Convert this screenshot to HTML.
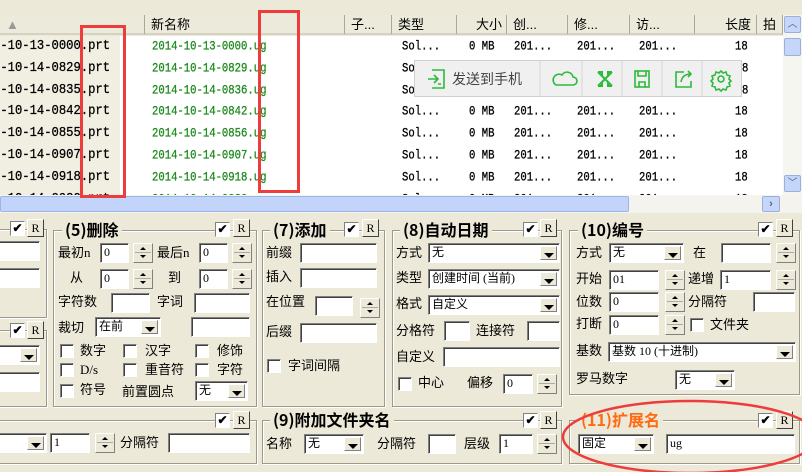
<!DOCTYPE html><html><head><meta charset="utf-8"><style>
*{box-sizing:border-box;margin:0;padding:0}
body{width:802px;height:472px;overflow:hidden;background:#ECE9D8;position:relative;font-family:"Liberation Sans","Noto Sans CJK SC",sans-serif;font-size:13px;color:#000}
.a{position:absolute;white-space:nowrap}
.t{position:absolute;white-space:nowrap;font-size:13px;line-height:16px;font-family:"Liberation Serif","Noto Sans CJK SC",sans-serif}
.h{position:absolute;top:15px;height:20px;border-right:1px solid #ACA899;border-bottom:2px solid #D6D2C2;background:#EBEADB;font-size:13px;line-height:19px;padding-left:6px;white-space:nowrap;overflow:hidden}
.r{position:absolute;font-family:"Liberation Mono",monospace;font-size:10.6px;line-height:14px;white-space:nowrap;transform:scaleY(1.25);transform-origin:0 0;-webkit-text-stroke:0.25px}
.r1{font-size:12.2px;transform:scaleY(1.1)}
.g{color:#1E8A1E}
.in{position:absolute;height:20px;background:#fff;border:1px solid;border-color:#808080 #fff #fff #808080;box-shadow:inset 1px 1px 0 #404040;font-size:12px;line-height:17px;padding-left:3px;font-family:"Liberation Serif","Noto Sans CJK SC",serif}
.sp{position:absolute;width:20px;height:20px;background:#ECE9D8;border:1px solid;border-color:#fff #808080 #808080 #fff}
.sp:before{content:"";position:absolute;left:6px;top:3px;border:3px solid transparent;border-bottom:3px solid #000;border-top:0}
.sp:after{content:"";position:absolute;left:6px;top:11px;border:3px solid transparent;border-top:3px solid #000;border-bottom:0}
.sp i{position:absolute;left:1px;right:1px;top:8px;border-top:1px solid #aaa}
.dd{position:absolute;top:2px;right:2px;width:17px;bottom:2px;background:#ECE9D8;border:1px solid;border-color:#fff #808080 #808080 #fff}
.dd:after{content:"";position:absolute;left:3px;top:6px;border:5px solid transparent;border-top:5px solid #000;border-bottom:0}
.cb{position:absolute;width:14px;height:14px;background:#fff;border:1px solid;border-color:#808080 #fff #fff #808080;box-shadow:inset 1px 1px 0 #404040}
.ck{position:absolute;width:15px;height:15px;background:#fff;border:1px solid;border-color:#808080 #fff #fff #808080;font-size:12px;line-height:13px;text-align:center;font-weight:bold}
.R{position:absolute;width:17px;height:18px;background:#ECE9D8;border:1px solid;border-color:#fff #404040 #404040 #fff;font-family:"Liberation Serif",serif;font-size:12px;line-height:16px;text-align:center}
.gb{position:absolute;border:1px solid #9D9A8C;box-shadow:1px 1px 0 #fff,inset 1px 1px 0 #fff}
.ti{position:absolute;background:#ECE9D8;font-weight:bold;font-size:16px;line-height:18px;padding:0 3px;white-space:nowrap;font-family:"Noto Sans CJK SC",sans-serif}
</style></head><body>
<div class="h" style="left:0;width:145px;color:#999">▲</div>
<div class="h" style="left:145px;width:200px">新名称</div>
<div class="h" style="left:345px;width:47px">子...</div>
<div class="h" style="left:392px;width:65px">类型</div>
<div class="h" style="left:457px;width:50px;text-align:right;padding-right:4px">大小</div>
<div class="h" style="left:507px;width:61px">创...</div>
<div class="h" style="left:568px;width:62px">修...</div>
<div class="h" style="left:630px;width:65px">访...</div>
<div class="h" style="left:695px;width:62px;text-align:right;padding-right:5px">长度</div>
<div class="h" style="left:757px;width:26px">拍</div>
<div class="a" style="left:0;top:36px;width:783px;height:159px;background:#fff"></div>
<div class="a" style="left:0;top:36px;width:120px;height:159px;background:#F1EFE2"></div>
<div class="a" style="left:0;top:36px;width:783px;height:159px;overflow:hidden" id="rows"></div>
<div class="a" style="left:783px;top:15px;width:19px;height:180px;background:#F6F6F1"></div>
<div class="a" style="left:784px;top:16px;width:17px;height:17px;background:#C6D6F8;border:1px solid #98AFE0;border-radius:2px;font-size:10px;text-align:center;color:#4D6185;line-height:15px">︿</div>
<div class="a" style="left:784px;top:38px;width:17px;height:18px;background:#C6D6F8;border:1px solid #98AFE0;border-radius:2px"></div>
<div class="a" style="left:784px;top:175px;width:17px;height:17px;background:#C6D6F8;border:1px solid #98AFE0;border-radius:2px;font-size:10px;text-align:center;color:#4D6185;line-height:15px">﹀</div>
<div class="a" style="left:0;top:195px;width:802px;height:18px;background:#F4F3EE"></div>
<div class="a" style="left:0;top:196px;width:629px;height:16px;background:#C3D4FB;border:1px solid #9CB4E8;border-radius:2px"></div>
<div class="a" style="left:762px;top:196px;width:18px;height:16px;background:#C6D6F8;border:1px solid #98AFE0;border-radius:2px;font-size:11px;text-align:center;color:#4D6185;line-height:14px;font-weight:bold">›</div>
<div class="a" style="left:414px;top:60px;width:328px;height:37px;background:#F0F0F0;border:1px solid #D0D0D0"></div>
<svg class="a" style="left:414px;top:60px" width="328" height="37">
<g stroke="#D6D6D6"><line x1="126" y1="1" x2="126" y2="36"/><line x1="168" y1="1" x2="168" y2="36"/><line x1="208" y1="1" x2="208" y2="36"/><line x1="248" y1="1" x2="248" y2="36"/><line x1="288" y1="1" x2="288" y2="36"/></g>
<g fill="none" stroke="#2DBA3A" stroke-width="1.6">
<path d="M18 10h12v18h-12M14 19h9M20 15l4 4-4 4M24 24h3"/>
<path d="M142 25h17a4 4 0 0 0 0-8a6 6 0 0 0-11-2a5 5 0 0 0-6 10z"/>
<path d="M184 12l14 14M198 12l-14 14" stroke-width="2"/>
<path d="M184 12h4v4M198 12h-4v4M184 26h4v-4M198 26h-4v-4" stroke-width="2"/>
<rect x="221" y="11" width="14" height="16"/><path d="M224 11v5h8v-5M225 27v-5h6v5"/>
<path d="M270 12h-8v15h15v-6M267 22c1-6 5-8 10-8M274 11l3 3-3 3"/>
<circle cx="307" cy="19" r="3"/><path d="M307 11l2 2 3-1 1 3 3 1-1 3 2 2-2 2 1 3-3 1-1 3-3-1-2 2-2-2-3 1-1-3-3-1 1-3-2-2 2-2-1-3 3-1 1-3 3 1z"/>
</g>
<text x="38" y="24" font-family="Noto Sans CJK SC,sans-serif" font-size="14" fill="#444">发送到手机</text>
</svg>
<div class="a" style="left:80px;top:25px;width:46px;height:173px;border:3px solid #EE3B3B"></div>
<div class="a" style="left:258px;top:10px;width:42px;height:183px;border:3px solid #EE3B3B"></div>

<div class="gb" style="left:-5px;top:229px;width:52px;height:89px"></div>
<div class="ck" style="left:10px;top:221px">✔</div><div class="R" style="left:27px;top:219px">R</div>
<div class="in" style="left:-4px;top:241px;width:44px"></div>
<div class="in" style="left:-4px;top:268px;width:44px"></div>
<div class="gb" style="left:-5px;top:330px;width:52px;height:77px"></div>
<div class="ck" style="left:10px;top:323px">✔</div><div class="R" style="left:27px;top:321px">R</div>
<div class="in" style="left:-4px;top:345px;width:44px"><span class="dd"></span></div>
<div class="in" style="left:-4px;top:372px;width:44px"></div>

<div class="gb" style="left:53px;top:230px;width:204px;height:177px"></div>
<div class="ti" style="left:62px;top:220px">(5)删除</div>
<div class="ck" style="left:215px;top:222px">✔</div><div class="R" style="left:233px;top:219px">R</div>
<div class="t" style="left:58px;top:245px">最初n</div><div class="in" style="left:100px;top:243px;width:29px">0</div><div class="sp" style="left:133px;top:243px"><i></i></div>
<div class="t" style="left:157px;top:245px">最后n</div><div class="in" style="left:199px;top:243px;width:29px">0</div><div class="sp" style="left:232px;top:243px"><i></i></div>
<div class="t" style="left:70px;top:270px">从</div><div class="in" style="left:100px;top:269px;width:29px">0</div><div class="sp" style="left:133px;top:269px"><i></i></div>
<div class="t" style="left:168px;top:270px">到</div><div class="in" style="left:199px;top:269px;width:29px">0</div><div class="sp" style="left:232px;top:269px"><i></i></div>
<div class="t" style="left:58px;top:294px">字符数</div><div class="in" style="left:111px;top:293px;width:39px"></div>
<div class="t" style="left:157px;top:294px">字词</div><div class="in" style="left:194px;top:293px;width:56px"></div>
<div class="t" style="left:58px;top:320px">裁切</div><div class="in" style="left:95px;top:317px;width:66px">在前<span class="dd"></span></div>
<div class="in" style="left:191px;top:317px;width:59px"></div>
<div class="cb" style="left:60px;top:344px"></div><div class="t" style="left:80px;top:343px">数字</div>
<div class="cb" style="left:123px;top:344px"></div><div class="t" style="left:145px;top:343px">汉字</div>
<div class="cb" style="left:195px;top:344px"></div><div class="t" style="left:217px;top:343px">修饰</div>
<div class="cb" style="left:60px;top:363px"></div><div class="t" style="left:80px;top:362px">D/s</div>
<div class="cb" style="left:123px;top:363px"></div><div class="t" style="left:145px;top:362px">重音符</div>
<div class="cb" style="left:195px;top:363px"></div><div class="t" style="left:217px;top:362px">字符</div>
<div class="cb" style="left:60px;top:384px"></div><div class="t" style="left:80px;top:382px">符号</div>
<div class="t" style="left:122px;top:384px">前置圆点</div><div class="in" style="left:195px;top:381px;width:53px">无<span class="dd"></span></div>

<div class="gb" style="left:262px;top:230px;width:123px;height:177px"></div>
<div class="ti" style="left:270px;top:220px">(7)添加</div>
<div class="ck" style="left:344px;top:222px">✔</div><div class="R" style="left:362px;top:219px">R</div>
<div class="t" style="left:266px;top:245px">前缀</div><div class="in" style="left:300px;top:243px;width:77px"></div>
<div class="t" style="left:266px;top:269px">插入</div><div class="in" style="left:300px;top:268px;width:77px"></div>
<div class="t" style="left:266px;top:294px">在位置</div><div class="in" style="left:315px;top:296px;width:38px"></div><div class="sp" style="left:360px;top:298px"><i></i></div>
<div class="t" style="left:266px;top:324px">后缀</div><div class="in" style="left:300px;top:323px;width:77px"></div>
<div class="cb" style="left:267px;top:359px"></div><div class="t" style="left:288px;top:358px">字词间隔</div>

<div class="gb" style="left:392px;top:230px;width:170px;height:177px"></div>
<div class="ti" style="left:400px;top:220px">(8)自动日期</div>
<div class="ck" style="left:523px;top:222px">✔</div><div class="R" style="left:540px;top:219px">R</div>
<div class="t" style="left:396px;top:245px">方式</div><div class="in" style="left:428px;top:243px;width:132px">无<span class="dd"></span></div>
<div class="t" style="left:396px;top:270px">类型</div><div class="in" style="left:428px;top:269px;width:132px">创建时间 (当前)<span class="dd"></span></div>
<div class="t" style="left:396px;top:296px">格式</div><div class="in" style="left:428px;top:295px;width:132px">自定义<span class="dd"></span></div>
<div class="t" style="left:396px;top:323px">分格符</div><div class="in" style="left:444px;top:321px;width:26px"></div>
<div class="t" style="left:476px;top:323px">连接符</div><div class="in" style="left:527px;top:321px;width:33px"></div>
<div class="t" style="left:396px;top:349px">自定义</div><div class="in" style="left:443px;top:347px;width:117px"></div>
<div class="cb" style="left:398px;top:377px"></div><div class="t" style="left:418px;top:375px">中心</div>
<div class="t" style="left:467px;top:375px">偏移</div><div class="in" style="left:503px;top:374px;width:30px">0</div><div class="sp" style="left:537px;top:374px"><i></i></div>

<div class="gb" style="left:569px;top:230px;width:231px;height:165px"></div>
<div class="ti" style="left:578px;top:220px">(10)编号</div>
<div class="ck" style="left:758px;top:222px">✔</div><div class="R" style="left:776px;top:219px">R</div>
<div class="t" style="left:576px;top:245px">方式</div><div class="in" style="left:609px;top:243px;width:75px">无<span class="dd"></span></div>
<div class="t" style="left:693px;top:245px">在</div><div class="in" style="left:721px;top:243px;width:50px"></div><div class="sp" style="left:776px;top:243px"><i></i></div>
<div class="t" style="left:576px;top:271px">开始</div><div class="in" style="left:609px;top:270px;width:50px">01</div><div class="sp" style="left:665px;top:270px"><i></i></div>
<div class="t" style="left:688px;top:271px">递增</div><div class="in" style="left:720px;top:270px;width:51px">1</div><div class="sp" style="left:776px;top:270px"><i></i></div>
<div class="t" style="left:576px;top:294px">位数</div><div class="in" style="left:609px;top:292px;width:50px">0</div><div class="sp" style="left:665px;top:292px"><i></i></div>
<div class="t" style="left:688px;top:294px">分隔符</div><div class="in" style="left:753px;top:292px;width:42px"></div>
<div class="t" style="left:576px;top:316px">打断</div><div class="in" style="left:609px;top:315px;width:50px">0</div><div class="sp" style="left:665px;top:315px"><i></i></div>
<div class="cb" style="left:690px;top:318px"></div><div class="t" style="left:710px;top:317px">文件夹</div>
<div class="t" style="left:576px;top:343px">基数</div><div class="in" style="left:608px;top:342px;width:188px">基数 10 (十进制)<span class="dd"></span></div>
<div class="t" style="left:576px;top:371px">罗马数字</div><div class="in" style="left:675px;top:370px;width:60px">无<span class="dd"></span></div>

<div class="gb" style="left:-5px;top:420px;width:262px;height:44px"></div>
<div class="ck" style="left:215px;top:413px">✔</div><div class="R" style="left:233px;top:411px">R</div>
<div class="in" style="left:-4px;top:433px;width:51px"><span class="dd"></span></div>
<div class="in" style="left:50px;top:433px;width:40px">1</div><div class="sp" style="left:95px;top:433px"><i></i></div>
<div class="t" style="left:120px;top:435px">分隔符</div><div class="in" style="left:168px;top:433px;width:82px"></div>

<div class="gb" style="left:262px;top:420px;width:300px;height:44px"></div>
<div class="ti" style="left:270px;top:410px">(9)附加文件夹名</div>
<div class="ck" style="left:523px;top:413px">✔</div><div class="R" style="left:540px;top:411px">R</div>
<div class="t" style="left:266px;top:436px">名称</div><div class="in" style="left:304px;top:434px;width:60px">无<span class="dd"></span></div>
<div class="t" style="left:377px;top:436px">分隔符</div><div class="in" style="left:428px;top:434px;width:28px"></div>
<div class="t" style="left:464px;top:436px">层级</div><div class="in" style="left:499px;top:434px;width:34px">1</div><div class="sp" style="left:537px;top:434px"><i></i></div>

<div class="gb" style="left:569px;top:420px;width:231px;height:44px"></div>
<div class="ti" style="left:578px;top:410px;color:#FF6A10">(11)扩展名</div>
<div class="ck" style="left:758px;top:413px">✔</div><div class="R" style="left:776px;top:411px">R</div>
<div class="in" style="left:578px;top:434px;width:76px">固定<span class="dd"></span></div>
<div class="in" style="left:666px;top:434px;width:129px">ug</div>
<svg class="a" style="left:0;top:0" width="802" height="472"><ellipse cx="690" cy="437" rx="127" ry="36" fill="none" stroke="#EE3B3B" stroke-width="2.5"/></svg>
<script>
var s='',names=['0000','0829','0835','0842','0855','0907','0918','0930'],nn=['0000','0829','0836','0842','0856','0907','0918','0930'];
for(var i=0;i<8;i++){var y=2+i*21.8;
s+='<div class="r r1" style="left:-7px;top:'+y+'px">4-10-'+(i==0?'13':'14')+'-'+names[i]+'.prt</div>';
s+='<div class="r g" style="left:152px;top:'+y+'px">2014-10-'+(i==0?'13':'14')+'-'+nn[i]+'.ug</div>';
if(i!=1&&i!=2){s+='<div class="r" style="left:402px;top:'+y+'px">Sol...</div><div class="r" style="left:469px;top:'+y+'px">0 MB</div><div class="r" style="left:514px;top:'+y+'px">201...</div><div class="r" style="left:577px;top:'+y+'px">201...</div><div class="r" style="left:639px;top:'+y+'px">201...</div><div class="r" style="left:735px;top:'+y+'px">18</div>';}
else{s+='<div class="r" style="left:402px;top:'+y+'px">So</div><div class="r" style="left:742px;top:'+y+'px">8</div>';}}
document.getElementById('rows').innerHTML=s;
</script>
</body></html>
